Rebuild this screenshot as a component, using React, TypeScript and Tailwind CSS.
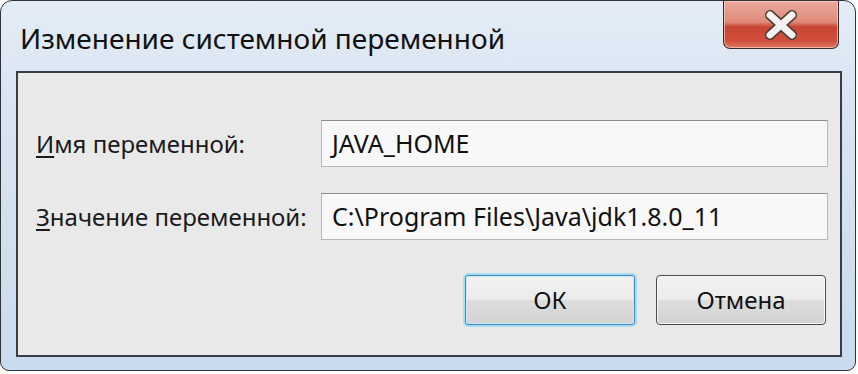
import React from "react"

const font = { fontFamily: '"Noto Sans", "Open Sans", sans-serif' }

function CloseButton() {
  return (
    <div className="mr-[16px] flex h-[48px] w-[116px] items-center justify-center rounded-b-[7px] border border-t-0 border-[#3b2a2a] bg-[linear-gradient(to_bottom,#eaa99c_0%,#de8a7a_45%,#c94433_55%,#d0503c_85%,#e07a66_100%)] shadow-[inset_0_0_0_1px_rgba(255,220,210,0.6)]">
      <svg width="34" height="30" viewBox="0 0 34 30">
        <path d="M6 5 L28 25 M28 5 L6 25" stroke="#4a3b38" strokeWidth="10" strokeLinecap="round" />
        <path d="M6 5 L28 25 M28 5 L6 25" stroke="#f4f1ee" strokeWidth="7" strokeLinecap="round" />
      </svg>
    </div>
  )
}

function Field({ label, access, value }: { label: string; access: string; value: string }) {
  return (
    <div className="flex items-center">
      <div className="w-[303px] pl-[18px] text-[24px] text-[#1a1a1a]">
        <span className="underline decoration-2 underline-offset-[3px]">{access}</span>
        {label}
      </div>
      <div className="flex h-[47px] w-[507px] items-center border border-[#b4b8bd] border-t-[#8a8e94] bg-[#f8f8f8] pl-[10px] text-[25px] text-[#111]">
        {value}
      </div>
    </div>
  )
}

export default function App() {
  return (
    <div className="h-[374px] w-[858px] bg-white" style={font}>
      <div className="flex h-[371px] w-[856px] flex-col rounded-t-[12px] rounded-b-[9px] border border-[#2f3338] bg-[linear-gradient(to_bottom,#e4edf7_0%,#d7e4f1_30%,#c9dbee_100%)]">
        <div className="flex h-[70px] items-start justify-between">
          <div className="pl-[19px] pt-[17px] text-[28px] leading-[40px] text-[#111]">
            Изменение системной переменной
          </div>
          <CloseButton />
        </div>
        <div className="mb-[13px] ml-[15px] mr-[13px] flex flex-1 flex-col border-2 border-[#3a3d42] bg-[#eae9e9] pt-[47px]">
          <div className="flex flex-col gap-[26px]">
            <Field access="И" label="мя переменной:" value="JAVA_HOME" />
            <Field access="З" label="начение переменной:" value="C:\Program Files\Java\jdk1.8.0_11" />
          </div>
          <div className="mt-[35px] flex justify-end gap-[21px] pr-[14px]">
            <button className="h-[50px] w-[170px] rounded-[3px] border border-[#3d8ab8] bg-[linear-gradient(to_bottom,#f2f2f2_0%,#ebebeb_50%,#dddddd_51%,#d2d2d2_100%)] text-[24px] text-[#111] shadow-[0_0_0_2px_#a9dcf2,inset_0_0_0_1px_#c8ecfb]">
              ОК
            </button>
            <button className="h-[50px] w-[170px] rounded-[4px] border border-[#4a4a4a] bg-[linear-gradient(to_bottom,#f2f2f2_0%,#ebebeb_50%,#dddddd_51%,#d2d2d2_100%)] text-[24px] text-[#111] shadow-[inset_0_0_0_1px_#fafafa]">
              Отмена
            </button>
          </div>
        </div>
      </div>
    </div>
  )
}
